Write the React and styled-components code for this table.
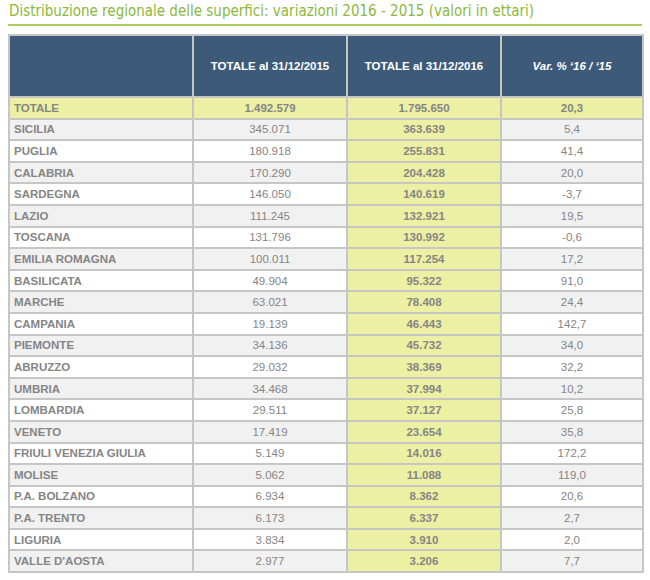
import React from "react";
import styled, { createGlobalStyle } from "styled-components";

const GlobalStyle = createGlobalStyle`
  html, body { margin: 0; padding: 0; background: #ffffff; }
  body { font-family: "Liberation Sans", Arial, sans-serif; }
`;

const Page = styled.div`
  width: 650px;
  padding: 0 8px;
  box-sizing: border-box;
`;

const Title = styled.h1`
  margin: 0;
  padding: 2px 0 4px 1px;
  font-family: "DejaVu Sans Condensed", "DejaVu Sans", sans-serif;
  font-weight: normal;
  font-size: 15px;
  line-height: 18px;
  color: #8cb83c;
  border-bottom: 2px solid #a8cf5c;
  width: 634px;
  box-sizing: border-box;
`;

const Table = styled.table`
  margin-top: 8px;
  width: 634px;
  border-collapse: collapse;
  table-layout: fixed;
  font-family: "Liberation Sans", Arial, sans-serif;
  font-size: 11.5px;
  color: #858585;
`;

const HeadCell = styled.th`
  height: 60px;
  background: #3d5b78;
  color: #ffffff;
  font-weight: bold;
  font-style: ${(p) => (p.$italic ? "italic" : "normal")};
  font-size: 11.5px;
  text-align: center;
  vertical-align: middle;
  border: 2px solid #c6c6c6;
  padding: 0 4px;
`;

const Row = styled.tr`
  height: 21.6px;
  background: ${(p) => (p.$total ? "#ecf0a2" : p.$alt ? "#f1f1f1" : "#ffffff")};
`;

const Cell = styled.td`
  border: 2px solid #c6c6c6;
  padding: 0 4px;
  text-align: ${(p) => (p.$left ? "left" : "center")};
  font-weight: ${(p) => (p.$bold ? "bold" : "normal")};
  background: ${(p) => (p.$hl ? "#ecf0a2" : "transparent")};
  line-height: 16px;
  white-space: nowrap;
`;

const data = [
  ["SICILIA", "345.071", "363.639", "5,4"],
  ["PUGLIA", "180.918", "255.831", "41,4"],
  ["CALABRIA", "170.290", "204.428", "20,0"],
  ["SARDEGNA", "146.050", "140.619", "-3,7"],
  ["LAZIO", "111.245", "132.921", "19,5"],
  ["TOSCANA", "131.796", "130.992", "-0,6"],
  ["EMILIA ROMAGNA", "100.011", "117.254", "17,2"],
  ["BASILICATA", "49.904", "95.322", "91,0"],
  ["MARCHE", "63.021", "78.408", "24,4"],
  ["CAMPANIA", "19.139", "46.443", "142,7"],
  ["PIEMONTE", "34.136", "45.732", "34,0"],
  ["ABRUZZO", "29.032", "38.369", "32,2"],
  ["UMBRIA", "34.468", "37.994", "10,2"],
  ["LOMBARDIA", "29.511", "37.127", "25,8"],
  ["VENETO", "17.419", "23.654", "35,8"],
  ["FRIULI VENEZIA GIULIA", "5.149", "14.016", "172,2"],
  ["MOLISE", "5.062", "11.088", "119,0"],
  ["P.A. BOLZANO", "6.934", "8.362", "20,6"],
  ["P.A. TRENTO", "6.173", "6.337", "2,7"],
  ["LIGURIA", "3.834", "3.910", "2,0"],
  ["VALLE D'AOSTA", "2.977", "3.206", "7,7"],
];

export default function App() {
  return (
    <>
      <GlobalStyle />
      <Page>
        <Title>Distribuzione regionale delle superfici: variazioni 2016 - 2015 (valori in ettari)</Title>
        <Table>
          <colgroup>
            <col style={{ width: "184px" }} />
            <col style={{ width: "154px" }} />
            <col style={{ width: "154px" }} />
            <col style={{ width: "142px" }} />
          </colgroup>
          <thead>
            <tr>
              <HeadCell></HeadCell>
              <HeadCell>TOTALE al 31/12/2015</HeadCell>
              <HeadCell>TOTALE al 31/12/2016</HeadCell>
              <HeadCell $italic>Var. % ‘16 / ‘15</HeadCell>
            </tr>
          </thead>
          <tbody>
            <Row $total>
              <Cell $left $bold>TOTALE</Cell>
              <Cell $bold>1.492.579</Cell>
              <Cell $bold>1.795.650</Cell>
              <Cell $bold>20,3</Cell>
            </Row>
            {data.map((r, i) => (
              <Row key={r[0]} $alt={i % 2 === 0}>
                <Cell $left $bold>{r[0]}</Cell>
                <Cell>{r[1]}</Cell>
                <Cell $bold $hl>{r[2]}</Cell>
                <Cell>{r[3]}</Cell>
              </Row>
            ))}
          </tbody>
        </Table>
      </Page>
    </>
  );
}
